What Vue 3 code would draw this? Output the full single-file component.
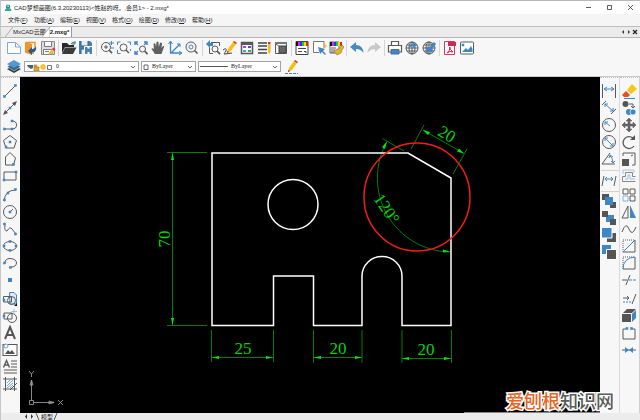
<script setup>
import { ref } from 'vue'

const menus = [
  ['文件', 'F'], ['功能', 'A'], ['编辑', 'E'], ['视图', 'V'],
  ['格式', 'O'], ['绘图', 'D'], ['修改', 'M'], ['帮助', 'H'],
]

const B = '#3f86c6'
const dot = (x, y) => `<rect x="${x - 1}" y="${y - 1}" width="2" height="2" fill="${B}" stroke="${B}" stroke-width=".5"/>`
const lens = (x, y, r) => `<circle cx="${x}" cy="${y}" r="${r}"/><path d="M${x + r * 0.7} ${y + r * 0.7}L${x + r * 0.7 + 3} ${y + r * 0.7 + 3}" stroke-width="1.6"/>`
const globe = '<circle cx="8" cy="8" r="6"/><ellipse cx="8" cy="8" rx="3" ry="6"/><path d="M8 2V14M2 8H14M3 5H13M3 11H13"/>'
const rainbow = (x, y, w) => ['#111', '#e22bd0', '#2637ee', '#18c944', '#f3e214', '#ee2020'].map((c, i) => `<rect x="${x + i * w}" y="${y}" width="${w}" height="4" fill="${c}" stroke="none"/>`).join('')
const pencil = '<path d="M5 13L6 9L11 2L14 4L9 11Z" fill="#f8bd13" stroke="none"/><path d="M11 2L12 1L15 3L14 4Z" fill="#cb2737" stroke="none"/><path d="M5 13L5.500 11L7 12Z" fill="#333" stroke="none"/>'

const art = {
  newFile: `<path d="M1.500 2.500H9.500L14.500 7V13.500H1.500Z" fill="#fff" stroke="#78a9dc"/><path d="M9.500 2.500V7H14.500" stroke="#78a9dc"/>`,
  openDoor: `<path d="M2 2L9 4V15L2 12.500Z" fill="#f0942a" stroke="none"/><path d="M3 2.500H12V10M9 13H11" stroke="#f0942a" stroke-width="1.500"/><path d="M5 11L9 7V9Q12 9 13 6Q14 12 9 12.500V15Z" fill="#265c91" stroke="none"/>`,
  saveEdit: `<path d="M1.500 1.500H14.500V14.500H1.500Z" fill="#ddd" stroke="#8b8b8b"/><path d="M4.500 2V6.500H11.500V2M3.500 14V9.500H12V14M5 11.500H9" fill="#fff" stroke="#777"/><path d="M8 14L12 9L14 11L10 14.500Z" fill="#f5bf25" stroke="none"/><path d="M12 9L13.500 7.500L15.500 9.500L14 11Z" fill="#d53048" stroke="none"/>`,
  folder: '<path d="M1 3H6L8 5H13V7H4L1 13Z" fill="#292929" stroke="none"/><path d="M4 7.500H15.500L12 14H1Z" fill="#3b3b3b" stroke="none"/><path d="M10 4Q12 1 14 3M14 1V4H11" stroke="#2c7d74"/>',
  saveAll: `<path d="M1 1H12L14 3V14H1Z" fill="#477fac" stroke="none"/><path d="M3 1V6H10V1M3 14V9H7V14" fill="#e4edf5" stroke="#356489"/><path d="M6.500 6.500H14.500V14.500H6.500Z" fill="#4784b7" stroke="#fff"/><path d="M9 7V9H12V7M9 14V11.500H12V14" fill="#fff" stroke="#3b6a94" stroke-width=".7"/>`,
  zoomIn: lens(7, 7, 4.5) + `<path d="M5 7H9M7 5V9" /><path d="M10 3H15M12.500 1V5M11 8H15" stroke="${B}"/>`,
  zoomWindow: lens(7.5, 7.5, 3.5) + `<path d="M1.500 5V2H4.500M11.500 2H14.500V5M1.500 10V13.500H4.500M14.500 11V9" stroke="${B}"/>`,
  zoomAll: lens(9.5, 9, 3) + `<path d="M2 5V2H5M2 2L5 5M11 2H14V5M14 2L11 5M2 11V14H5M2 14L5 11" stroke="${B}" stroke-width="1.400"/>`,
  hand: '<path d="M5 14L1.500 9Q2 7.500 4 9L3.500 4Q4.500 2.500 5.500 4L6 7L6.500 2Q7.500 1 8.500 2L8.800 7L10 3Q11.500 2 12 3.500L11.500 8L13 6Q14.500 5.500 14 7L11.500 14Z" fill="#606060" stroke="none"/>',
  axes: `<path d="M3.500 2V13H14M4 13L13 4" stroke="${B}" stroke-width="1.300"/><path d="M1.500 4L3.500 1L5.500 4M12 11L15 13L12 15M10 4H13V7" stroke="${B}"/>`,
  zoomReal: lens(7, 7, 5) + `<circle cx="7" cy="7" r="2" stroke="${B}"/>`,
  zoomPrev: lens(10, 9, 3) + `<path d="M14.500 6V2.500H6M4.500 7V13.500H8"/><path d="M1 4L5 0V3H8V6H5V8Z" fill="${B}" stroke="none"/>`,
  draw: pencil + '<path d="M1 10Q5 7 4 11Q1 15 3 14L10 13" stroke="#444"/>',
  props: `<path d="M2.500 2.500H13.500V13.500H2.500Z" fill="#fff" stroke="#555" stroke-width="1.500"/><path d="M2 4H14" stroke-width="2"/><path d="M4 7H7" stroke="#d02fe0" stroke-width="2"/><path d="M9 7H12" stroke="#4f48e4" stroke-width="2"/><path d="M4 11H7" stroke="#37a7e4" stroke-width="2"/><path d="M9 11H12" stroke="#21b94f" stroke-width="2"/>`,
  lineStyle: '<path d="M2 3H11M2 6H11M2 9.500H11M2 13H11" stroke="#444" stroke-width="1.400"/><path d="M12 4H14.500V12L13 14L12 12Z" fill="#f3b819" stroke="none"/><path d="M12 2H14.500V4H12Z" fill="#d1303d" stroke="none"/>',
  block: '<path d="M2.500 2.500H13.500V13.500H2.500Z" fill="#f8f8f8"/><path d="M2 2H14V4H2Z" fill="#777" stroke="none"/><path d="M6 6H13V13H6Z" fill="#666" stroke="#444"/><path d="M3 4L7 7"/>',
  colorBook: '<path d="M2 1.500H14V14.500H2Z" fill="#fff" stroke="#444"/>' + rainbow(2, 2, 2) + '<path d="M4 8.500H12M4 11.500H8M10 11.500H12V13" stroke="#444"/>',
  pick: `<path d="M13 8V1.500H2.500V12.500H8" fill="#fff" stroke="#777"/><path d="M7 7L14 9L12 11L15 14L14 15L11 12L9 14Z" fill="${B}" stroke="none"/><path d="M14 4V8M12 6H16" stroke="#f4b521"/>`,
  brush: '<path d="M2 2H11V13H2Z" fill="#fff"/>' + rainbow(2, 2, 2) + '<path d="M3 8H8M3 10H7M3 12H6"/><path d="M14 5L11 9L9 9L6 11L9 15L13 13L14 10L16 7Z" fill="#e5b42a" stroke="#8a7130" stroke-width=".6"/>',
  undo: `<path d="M1 7L7 2V5Q14 5 14.500 13Q12 9 7 9V12Z" fill="#4a8ac2" stroke="none"/>`,
  redo: '<path d="M15 7L9 2V5Q2 5 1.500 13Q4 9 9 9V12Z" fill="#c8c8c8" stroke="none"/>',
  print: `<path d="M4.500 5.500V1.500H11.500V5.500" fill="#fff" stroke-width="1.200"/><path d="M4 12H1.500V5.500H14.500V12H12" fill="#fff" stroke-width="1.200"/><path d="M4 9.500H12V14H4Z" fill="${B}" stroke="#4b6f8e"/>`,
  globeUp: globe + `<path d="M5 8Q5 4 9 4V2L13 5L9 8V6Q7 6 5 8Z" fill="${B}" stroke="none"/>`,
  globeDown: globe + `<path d="M13 2L15 4L11 9L13 11L5 13L6 6L8 8Z" fill="${B}" stroke="none"/>`,
  pdf: '<path d="M2.500 1.500H12.500V14.500H2.500Z" fill="#fff" stroke="#d8355e"/><path d="M6 2H14V6H6Z" fill="#d2254f" stroke="none"/><path d="M7.500 7Q8 10 11 12Q8 10.500 5 13Q8 11 8 7" stroke="#d2254f"/>',
  picture: `<rect x="1.500" y="2" width="13" height="12" rx="1" fill="#fff"/><path d="M3 12L7 8L9 10L12 6L13.500 9V12Z" fill="${B}" stroke="none"/>` + dot(4, 5),
  line: '<path d="M3 13L13 3"/>' + dot(2.5, 13.5) + dot(13.5, 2.5),
  ray: '<path d="M2 14L14 2"/><path d="M1 15L3 10L6 13ZM15 1L10 3L13 6Z" fill="#555" stroke="none"/>' + dot(8, 8),
  polyline: '<path d="M2 12H10Q14.500 12 14.500 8Q14.500 4 10 4"/>' + dot(2.5, 12) + dot(10, 12) + dot(10, 4),
  polygon: '<path d="M8 1.500L14.500 6.500L12 14H4L1.500 6.500Z"/>' + dot(8, 8) + dot(4, 13),
  shape: '<path d="M3.500 14V6L8 1.500L13.500 7L11.500 14Z"/>' + dot(11.5, 13.5),
  rect: '<path d="M2 4H14V12H2Z"/>' + dot(14, 4) + dot(2, 12),
  arc: '<path d="M2 14Q3 3 14 3"/>' + dot(2.5, 13) + dot(6, 6) + dot(13.5, 2.5),
  circle: '<circle cx="8" cy="8" r="6.500"/><path d="M8 8L11 5"/>' + dot(8, 8),
  spline: '<path d="M3 4Q2 10 5 10Q8 5 10 8L14 13"/>' + dot(2.5, 3) + dot(13.5, 13),
  ellipse: '<ellipse cx="8" cy="8" rx="6.500" ry="4.500"/>' + dot(8, 3.5) + dot(2, 8) + dot(14, 8) + dot(8, 12.5),
  ellipseArc: '<path d="M3 8Q3 3.500 8 3.500Q14.500 4 14.500 8Q14 12 9 12"/>' + dot(2.5, 8) + dot(8.5, 12.5),
  point: `<rect x="6" y="6" width="4" height="4" fill="${B}" stroke="none"/>`,
  insert: `<path d="M7.500 1.500H12L14.500 4V13H8Z" fill="#dcecfa" stroke="${B}"/><path d="M1.500 5.500H9.500V11H1.500Z"/><circle cx="9.500" cy="9.500" r="4"/><path d="M12 15H15V12Z" fill="#111" stroke="none"/>` + dot(2, 9),
  makeBlock: `<path d="M2 5H10V11H2Z"/><circle cx="10" cy="10" r="4.500"/><path d="M12 1V6M9.500 3.500H15" stroke="#9ac2e6"/>` + dot(2, 8),
  bigText: '<path d="M3 14L8 2L13 14M5 10H11" stroke="#555" stroke-width="2"/>',
  image: `<rect x="1" y="2.500" width="14" height="11" fill="#fff"/><path d="M3 12L6 8L8 10L10 8L13 12Z" fill="#555" stroke="none"/><circle cx="4" cy="4" r="2" fill="#fff" stroke="#68a4d8"/>`,
  mtext: '<path d="M1.500 8.500L4.500 1.500L7.500 8.500M3 6H6" stroke-width="1.400"/><path d="M9 2H15M9 5H15M9 8H15M2 11H15M2 14H15"/>',
  hatch: `<path d="M3.500 1V15M12.500 1V15M1 3H15M1 13H15"/><path d="M5 7L9 3M5 10L11 4M5 12L11 7M8 12L11 9" stroke="#75a7d5"/><path d="M8 14L15 7"/>`,
  dimLinear: `<path d="M1.500 1V15M14.500 1V15"/><path d="M3 6H13M6 4L3 6L6 8M10 4L13 6L10 8" stroke="${B}"/>`,
  dimAligned: `<path d="M1 5L5 1M10 14L15 9"/><path d="M4 4L12 11M4 7V4H7M12 8V11H9" stroke="${B}"/>`,
  dimRadius: `<circle cx="8" cy="8" r="6.500"/><path d="M4 5L9 9M4 8V5H7" stroke="${B}"/>`,
  dimDiameter: `<circle cx="8" cy="8" r="6.500"/><path d="M4 4L12 12M4 7V4H7M12 9V12H9" stroke="${B}"/>`,
  dimAngle: `<path d="M14 13H1L9 2"/><path d="M9 5Q12 7 12 12M8 7L9 4L12 6M10 10L12 12L14 10" stroke="${B}"/>`,
  dimEdit: `<path d="M1 14L3 4M13 14L15 4"/><path d="M4 7H12M6 5L4 7L6 9M10 5L12 7L10 9" stroke="${B}"/>`,
  front: `<path d="M1 1H8V7H1ZM9 9H15V15H9Z" fill="#555" stroke="none"/><path d="M4 4H12V12H4Z" fill="${B}" stroke="none"/>`,
  between: `<path d="M5 5H13V12H5Z" fill="${B}" stroke="none"/><path d="M1 1H7V7H1ZM9 9H15V15H9Z" fill="#555" stroke="none"/>`,
  above: `<path d="M6 6H15V15H6Z" fill="#555" stroke="none"/><path d="M.5 .5H11V11H.5Z" fill="${B}" stroke="#fff"/>`,
  below: `<path d="M1 1H10V10H1Z" fill="${B}" stroke="none"/><path d="M5.500 5.500H15.500V15.500H5.500Z" fill="#555" stroke="#fff"/>`,
  eraser: `<path d="M6 7L11 1L16 6L10 11Z" fill="#fbc516" stroke="none"/><path d="M5 8L9 12L7 14H3L1 12Z" fill="#ed4b20" stroke="none"/><path d="M3 15.500H14" stroke="${B}"/>`,
  copy: `<circle cx="4.500" cy="4" r="3" fill="#555" stroke="none"/><path d="M8 4H12V7M10 6L12 8L14 6"/><circle cx="8" cy="12" r="3" fill="${B}" stroke="none"/><circle cx="12" cy="12" r="3" fill="${B}" stroke="#fff" stroke-width=".7"/>`,
  move: '<path d="M8 1L11 4H9V7H12V5L15 8L12 11V9H9V12H11L8 15L5 12H7V9H4V11L1 8L4 5V7H7V4H5Z" fill="#666" stroke="#555" stroke-width=".5"/>',
  rotate: '<path d="M13 12A6 6 0 1 1 12 4" stroke-width="1.300"/><path d="M9 6H14V1Z" fill="#555" stroke="none"/>',
  scale: '<path d="M2 5V2H14V14H11"/><path d="M1 8H8V15H1Z" fill="#555" stroke="none"/><path d="M10 5L12 4"/>',
  offset: '<path d="M1.500 13.500V8.500H4.500V4.500H11.500V8.500H14.500M1.500 13.500H14.500" stroke="#888"/><path d="M4 11H7V7H9V11H14M2 6V2H13V5" stroke="#9cc3e6"/>',
  array: `<path d="M2 2H7V7H2ZM9 2H14V7H9ZM9 9H14V14H9Z"/><path d="M2 9H7V14H2Z" stroke="#81b5e3"/>`,
  mirror: `<path d="M7 2V14H1Z"/><path d="M9 1L15 14H9Z" fill="${B}" stroke="none"/>`,
  curve: '<path d="M1 11Q5 0 8 8T15 6"/>',
  chamfer: `<path d="M2 14V2H14" stroke-dasharray="1 1"/><path d="M2 14H14V2"/><path d="M2 14L14 2" stroke="${B}"/>`,
  fillet: `<path d="M2 14V2H14" stroke-dasharray="1 1"/><path d="M2 14H14V2"/><path d="M2 14Q2 3 14 2" stroke="${B}"/>`,
  trim: `<path d="M1 8H6M5 13L9 3"/><path d="M8 8H15" stroke="${B}" stroke-dasharray="3 1"/>`,
  extend: `<path d="M2 7H8M6 5L8 7L6 9M11 13L15 3"/><path d="M2 11H10" stroke="${B}" stroke-dasharray="2 1"/>`,
  explode: `<path d="M1 6H10V14H1ZM2 5L6 1H15L11 5Z" fill="#555" stroke="none"/><path d="M11 6L15 2V10L11 14Z" fill="${B}" stroke="none"/>`,
  breakAt: '<path d="M5 4H2V14H14V4H11"/>' + dot(6, 3.5) + dot(10.5, 3.5),
  join: `<path d="M1 8H15" /><path d="M4 5L8 8L4 11ZM12 5L8 8L12 11Z" fill="${B}" stroke="none"/>`,
  layers: `<path d="M1 10L8 7L15 10L8 14Z" fill="#333" stroke="none"/><path d="M1 7.500L8 4L15 7.500L8 12Z" fill="#2f6697" stroke="#fff" stroke-width=".5"/><path d="M1 5L8 1L15 5L8 9Z" fill="#5797d0" stroke="none"/>`,
  penLine: pencil + `<path d="M2 14.500H15" stroke="${B}" stroke-dasharray="3 1"/>`,
}

const topGroups = [
  [['newFile', '新建'], ['openDoor', '打开'], ['saveEdit', '保存']],
  [['folder', '打开文件夹'], ['saveAll', '全部保存']],
  [['zoomIn', '缩放'], ['zoomWindow', '窗口缩放'], ['zoomAll', '全部显示'], ['hand', '平移'], ['axes', '坐标'], ['zoomReal', '实时缩放']],
  [['zoomPrev', '上一视图'], ['draw', '绘制'], ['props', '特性'], ['lineStyle', '线型'], ['block', '图块']],
  [['colorBook', '颜色'], ['pick', '选择'], ['brush', '格式刷']],
  [['undo', '撤销'], ['redo', '重做']],
  [['print', '打印'], ['globeUp', '上传'], ['globeDown', '下载']],
  [['pdf', '输出 PDF'], ['picture', '输出图片']],
]
const leftGroups = [
  [['line', '直线'], ['ray', '构造线'], ['polyline', '多段线'], ['polygon', '正多边形'], ['shape', '多边形'], ['rect', '矩形']],
  [['arc', '圆弧'], ['circle', '圆'], ['spline', '样条曲线'], ['ellipse', '椭圆'], ['ellipseArc', '椭圆弧'], ['point', '点']],
  [['insert', '插入块'], ['makeBlock', '创建块'], ['bigText', '文字'], ['image', '图像'], ['mtext', '多行文字'], ['hatch', '填充']],
]
const dimGroups = [
  [['dimLinear', '线性标注'], ['dimAligned', '对齐标注'], ['dimRadius', '半径标注'], ['dimDiameter', '直径标注'], ['dimAngle', '角度标注']],
  [['dimEdit', '编辑标注']],
  [['front', '前置'], ['between', '后置'], ['above', '置于对象之上'], ['below', '置于对象之下']],
]
const editGroups = [
  [['eraser', '删除'], ['copy', '复制'], ['move', '移动'], ['rotate', '旋转'], ['scale', '缩放'], ['offset', '偏移']],
  [['array', '阵列'], ['mirror', '镜像'], ['curve', '曲线'], ['chamfer', '倒角'], ['fillet', '圆角'], ['trim', '修剪']],
  [['extend', '延伸'], ['explode', '分解'], ['breakAt', '打断'], ['join', '合并']],
]

const layer = ref('0')
const color = ref('ByLayer')
const lineType = ref('ByLayer')
</script>

<template>
  <div class="window">
    <header class="title">
      <svg class="logo" viewBox="0 0 9 9"><path d="M2 1H6L7 4L5 6H2L1 4Z" fill="#2a8b86" /><path d="M0 7L3 5L8 6V9H0Z" fill="#35a49b" /><path d="M3 2H5V4H3Z" fill="#d6f0ea" /></svg>
      <h1>CAD梦想画图(6.3.20230113)&lt;姓赵的呀。,会员1&gt; - 2.mxg*</h1>
      <div class="controls">
        <button aria-label="最小化"><svg viewBox="0 0 7 7"><path d="M1 3.500H6" /></svg></button>
        <button aria-label="最大化"><svg viewBox="0 0 7 7"><path d="M1.500 1.500H5.500V5.500H1.500Z" /></svg></button>
        <button aria-label="关闭"><svg viewBox="0 0 7 7"><path d="M1 1L6 6M6 1L1 6" /></svg></button>
      </div>
    </header>

    <nav class="menu">
      <button v-for="[name, key] in menus" :key="key">{{ name }}(<u>{{ key }}</u>)</button>
    </nav>

    <div class="tabs">
      <svg class="slant" viewBox="0 0 8 10"><path d="M0 10L8 0" /></svg>
      <button class="tab">MxCAD云图</button>
      <svg class="slant lit" viewBox="0 0 8 10"><path d="M0 10L8 0V10" /></svg>
      <button class="tab active">2.mxg*</button>
      <div class="tab-nav">
        <button aria-label="向左"><svg viewBox="0 0 6 6"><path d="M4 1L2 3L4 5Z" /></svg></button>
        <button aria-label="向右"><svg viewBox="0 0 6 6"><path d="M2 1L4 3L2 5Z" /></svg></button>
        <button aria-label="关闭标签"><svg class="bold" viewBox="0 0 6 6"><path d="M1 1L5 5M5 1L1 5" /></svg></button>
      </div>
    </div>

    <div class="toolbar">
      <div v-for="(group, g) in topGroups" :key="g" class="group">
        <button v-for="[icon, label] in group" :key="icon" class="tool" :aria-label="label">
          <svg viewBox="0 0 16 16" v-html="art[icon]" />
        </button>
      </div>
    </div>

    <div class="format">
      <button class="tool" aria-label="图层管理"><svg viewBox="0 0 16 16" v-html="art.layers" /></button>
      <div class="combo layer">
        <svg class="state" viewBox="0 0 27 8">
          <path d="M1 2H7V5L5 6L2 4Z" fill="#44617e" /><path d="M8 4H13V8H8ZM8 4V2H11V4" fill="#dca52e" stroke="#a97719" stroke-width=".6" />
          <circle cx="17" cy="4" r="2.400" fill="#ffc91f" stroke="#eda61a" stroke-width=".6" /><path d="M21.500 2.500H25.500V6.500H21.500Z" fill="#fff" stroke="#555" stroke-width=".8" />
        </svg>
        <select v-model="layer" aria-label="图层"><option>0</option></select>
        <svg class="chevron" viewBox="0 0 6 6"><path d="M1 2L3 4L5 2" /></svg>
      </div>
      <div class="combo color">
        <svg class="swatch" viewBox="0 0 6 8"><path d="M1 2H5V6.500H1Z" /></svg>
        <select v-model="color" aria-label="颜色"><option>ByLayer</option></select>
        <svg class="chevron" viewBox="0 0 6 6"><path d="M1 2L3 4L5 2" /></svg>
      </div>
      <div class="combo type">
        <span class="sample" />
        <select v-model="lineType" aria-label="线型"><option>ByLayer</option></select>
        <svg class="chevron" viewBox="0 0 6 6"><path d="M1 2L3 4L5 2" /></svg>
      </div>
      <button class="tool" aria-label="线型设置"><svg viewBox="0 0 16 16" v-html="art.penLine" /></button>
    </div>

    <main class="work">
      <aside class="side left">
        <div v-for="(group, g) in leftGroups" :key="g" class="stack">
          <button v-for="[icon, label] in group" :key="icon" class="tool" :aria-label="label">
            <svg viewBox="0 0 16 16" v-html="art[icon]" />
          </button>
        </div>
      </aside>

      <section class="canvas">
        <svg class="drawing" viewBox="20 77 580 336" preserveAspectRatio="xMinYMin meet">
          <g class="dim">
            <path d="M167 152.500H207M167 325.500H207M172.500 153V325" />
            <path d="M211.500 330V362M273.500 330V362M313.500 330V363M362 330V363M402 330V363M451.500 330V363" />
            <path d="M212 357.500H273M314 357.500H362M402 358.500H451" />
            <path d="M424 125L411 149M467 149L453 174M423 130L464 153.500" />
            <path d="M382.500 138.500L404 151M387 141.500A74 74 0 0 0 451 252" />
          </g>
          <g class="heads">
            <path d="M172.500 153L174 160H171ZM172.500 325L171 318H174Z" />
            <path d="M212 357.500L219 356V359ZM273 357.500L266 356V359ZM314 357.500L321 356V359ZM362 357.500L355 356V359ZM402 358.500L409 357V360ZM451 358.500L444 357V360Z" />
            <path d="M423 130L430 132L428 135ZM464 153.500L457 151.500L459 148.500ZM387 141.500L385 149L382 147ZM450 251.500L443 252.500V249.500Z" />
          </g>
          <g class="part">
            <path d="M212 153H408L451 178V325.500H402V276A20 19.500 0 0 0 362 276V325.500H313.500V276H273.500V325.500H212Z" />
            <circle cx="293" cy="204.500" r="25" />
          </g>
          <ellipse class="mark" cx="417" cy="197" rx="53" ry="54" />
          <g class="figures">
            <text x="243" y="354">25</text>
            <text x="338" y="354">20</text>
            <text x="426" y="355">20</text>
            <text transform="translate(170 239) rotate(-90)">70</text>
            <text transform="translate(444 139) rotate(30)">20</text>
            <text transform="translate(382 212) rotate(56)">120°</text>
          </g>
          <g class="ucs">
            <path d="M29.500 400.500H33.500V404.500H29.500ZM31.500 400V381M34 402.500H54M31.500 380L30 385H33ZM54 402.500L49 401V404ZM29 371L31.500 374L34 371M31.500 374V377M58 400L63 405M63 400L58 405" />
            <path d="M464 412.500H600" />
          </g>
        </svg>
      </section>

      <aside class="side dims">
        <div v-for="(group, g) in dimGroups" :key="g" class="stack">
          <button v-for="[icon, label] in group" :key="icon" class="tool" :aria-label="label">
            <svg viewBox="0 0 16 16" v-html="art[icon]" />
          </button>
        </div>
      </aside>
      <aside class="side edit">
        <div v-for="(group, g) in editGroups" :key="g" class="stack">
          <button v-for="[icon, label] in group" :key="icon" class="tool" :aria-label="label">
            <svg viewBox="0 0 16 16" v-html="art[icon]" />
          </button>
        </div>
      </aside>
    </main>

    <footer class="sheets">
      <svg viewBox="0 0 16 7"><path d="M3 1L1 3.500L3 6ZM7 1L9 3.500L7 6Z" fill="#333" /><path d="M12 0L15 7" stroke="#555" /></svg>
      <button>模型</button>
      <svg class="end" viewBox="0 0 4 7"><path d="M0 7L3 0" stroke="#555" /></svg>
    </footer>

    <p class="brand"><b>爱刨根</b>知识网</p>
  </div>
</template>

<style>
body {
  margin: 0;
}
</style>

<style scoped>
.window {
  position: relative;
  box-sizing: border-box;
  height: 100vh;
  display: flex;
  flex-direction: column;
  overflow: hidden;
  border-top: 1px solid #b4b8b8;
  border-left: 1px solid #c3c6cc;
  background: #f7f7f7;
  color: #222;
  font-family: "Liberation Sans", "Noto Sans CJK SC", sans-serif;
  font-size: 6px;
}
button {
  padding: 0;
  border: 0;
  background: none;
  color: inherit;
  font: inherit;
}
svg {
  display: block;
  fill: none;
}
.title {
  display: flex;
  align-items: center;
  flex: 0 0 13px;
  padding: 0 6px 0 4px;
  background: #fff;
}
.logo {
  width: 7px;
  height: 7px;
}
h1 {
  flex: 1;
  margin: 0 0 0 2px;
  font-size: 6px;
  line-height: 12px;
  font-weight: 400;
  white-space: nowrap;
}
.controls {
  display: flex;
  gap: 14px;
}
.controls svg {
  width: 7px;
  height: 7px;
  stroke: #333;
  stroke-width: 0.8;
}
.menu {
  display: flex;
  align-items: center;
  gap: 6px;
  flex: 0 0 12px;
  padding-left: 7px;
  border-bottom: 1px solid #bdbdbd;
  background: #f5f5f5;
  line-height: 12px;
}
.menu button {
  min-width: 20px;
  text-align: left;
  white-space: nowrap;
}
.tabs {
  display: flex;
  align-items: stretch;
  flex: 0 0 10px;
  padding-left: 4px;
  border-bottom: 1px solid #b5b5b5;
  background: #ebebeb;
}
.slant {
  width: 8px;
  height: 10px;
  stroke: #999;
  stroke-width: 0.8;
}
.slant.lit {
  margin-left: -4px;
  fill: #fff;
}
.tab {
  line-height: 10px;
  white-space: nowrap;
}
.tab.active {
  padding-right: 2px;
  border-right: 1px solid #999;
  background: #fff;
  font-weight: 700;
}
.tab-nav {
  display: flex;
  align-items: center;
  margin-left: auto;
  padding-right: 2px;
}
.tab-nav svg {
  width: 6px;
  height: 6px;
  fill: #333;
}
.tab-nav .bold {
  stroke: #222;
  stroke-width: 1.2;
}
.toolbar {
  display: flex;
  align-items: center;
  flex: 0 0 19px;
  padding-left: 5px;
  background: #f7f7f7;
}
.group {
  display: flex;
  gap: 1px;
  margin-right: 2px;
  padding-right: 2px;
  border-right: 1px solid #d5d5d5;
}
.group:last-child {
  border-right: 0;
}
.tool {
  width: 16px;
  height: 16px;
}
.tool svg {
  width: 16px;
  height: 16px;
  stroke: #5a5a5a;
}
.format {
  display: flex;
  align-items: center;
  flex: 0 0 19px;
  gap: 2px;
  padding-left: 5px;
  border-bottom: 1px solid #c9c9c9;
}
.combo {
  display: flex;
  align-items: center;
  box-sizing: border-box;
  height: 11px;
  padding: 0 2px 0 1px;
  border: 1px solid #a3a3a3;
  background: #fff;
}
.layer {
  flex: 0 0 115px;
}
.color {
  flex: 0 0 55px;
}
.type {
  flex: 0 0 83px;
}
.combo select {
  flex: 1;
  min-width: 0;
  margin: 0;
  padding: 0 0 0 3px;
  border: 0;
  appearance: none;
  background: none;
  color: #222;
  font: 6px/9px "Liberation Serif", serif;
}
.state {
  width: 27px;
  height: 8px;
}
.swatch {
  width: 6px;
  height: 8px;
  stroke: #444;
  stroke-width: 0.8;
}
.chevron {
  width: 6px;
  height: 6px;
  stroke: #444;
  stroke-width: 0.8;
}
.sample {
  width: 28px;
  border-top: 1px solid #555;
}
.work {
  display: flex;
  flex: 1;
  min-height: 0;
}
.side {
  box-sizing: border-box;
  display: flex;
  flex-direction: column;
  gap: 3px;
  padding-top: 5px;
  border-top: 1px dotted #c2c2c2;
}
.stack {
  display: flex;
  flex-direction: column;
  gap: 1px;
}
.left {
  flex: 0 0 19px;
  padding-left: 1px;
}
.dims {
  flex: 0 0 20px;
  padding-left: 1px;
  border-right: 1px solid #dadada;
}
.dims .stack + .stack {
  padding-top: 1px;
  border-top: 1px solid #d2d2d2;
}
.edit {
  flex: 0 0 20px;
  padding-left: 1px;
  border-right: 1px solid #d0d0d0;
}
.canvas {
  flex: 1;
  min-width: 0;
  background: #000;
}
.drawing {
  width: 100%;
  height: 100%;
}
.dim {
  stroke: #007f08;
}
.heads {
  fill: #00e813;
}
.part {
  stroke: #fff;
  stroke-width: 1.5;
}
.mark {
  stroke: #f11e14;
  stroke-width: 1.5;
}
.figures {
  fill: #00d40b;
  font-family: "Liberation Serif", serif;
  font-size: 17px;
  text-anchor: middle;
}
.ucs {
  stroke: #aaa;
  stroke-width: 0.8;
}
.sheets {
  display: flex;
  align-items: center;
  flex: 0 0 7px;
  padding-left: 23px;
  background: #ececec;
  line-height: 7px;
}
.sheets svg {
  width: 16px;
  height: 7px;
}
.sheets button {
  padding: 0 1px;
  font-family: "Noto Sans CJK SC", sans-serif;
}
.sheets .end {
  width: 4px;
}
.brand {
  position: absolute;
  right: 26px;
  bottom: 10px;
  margin: 0;
  color: #5b5b5b;
  font: 500 18px/20px "Noto Sans CJK SC", sans-serif;
  white-space: nowrap;
  -webkit-text-stroke: 3px #fff;
  paint-order: stroke fill;
}
.brand b {
  color: #e9641c;
  font-weight: 500;
}
</style>
